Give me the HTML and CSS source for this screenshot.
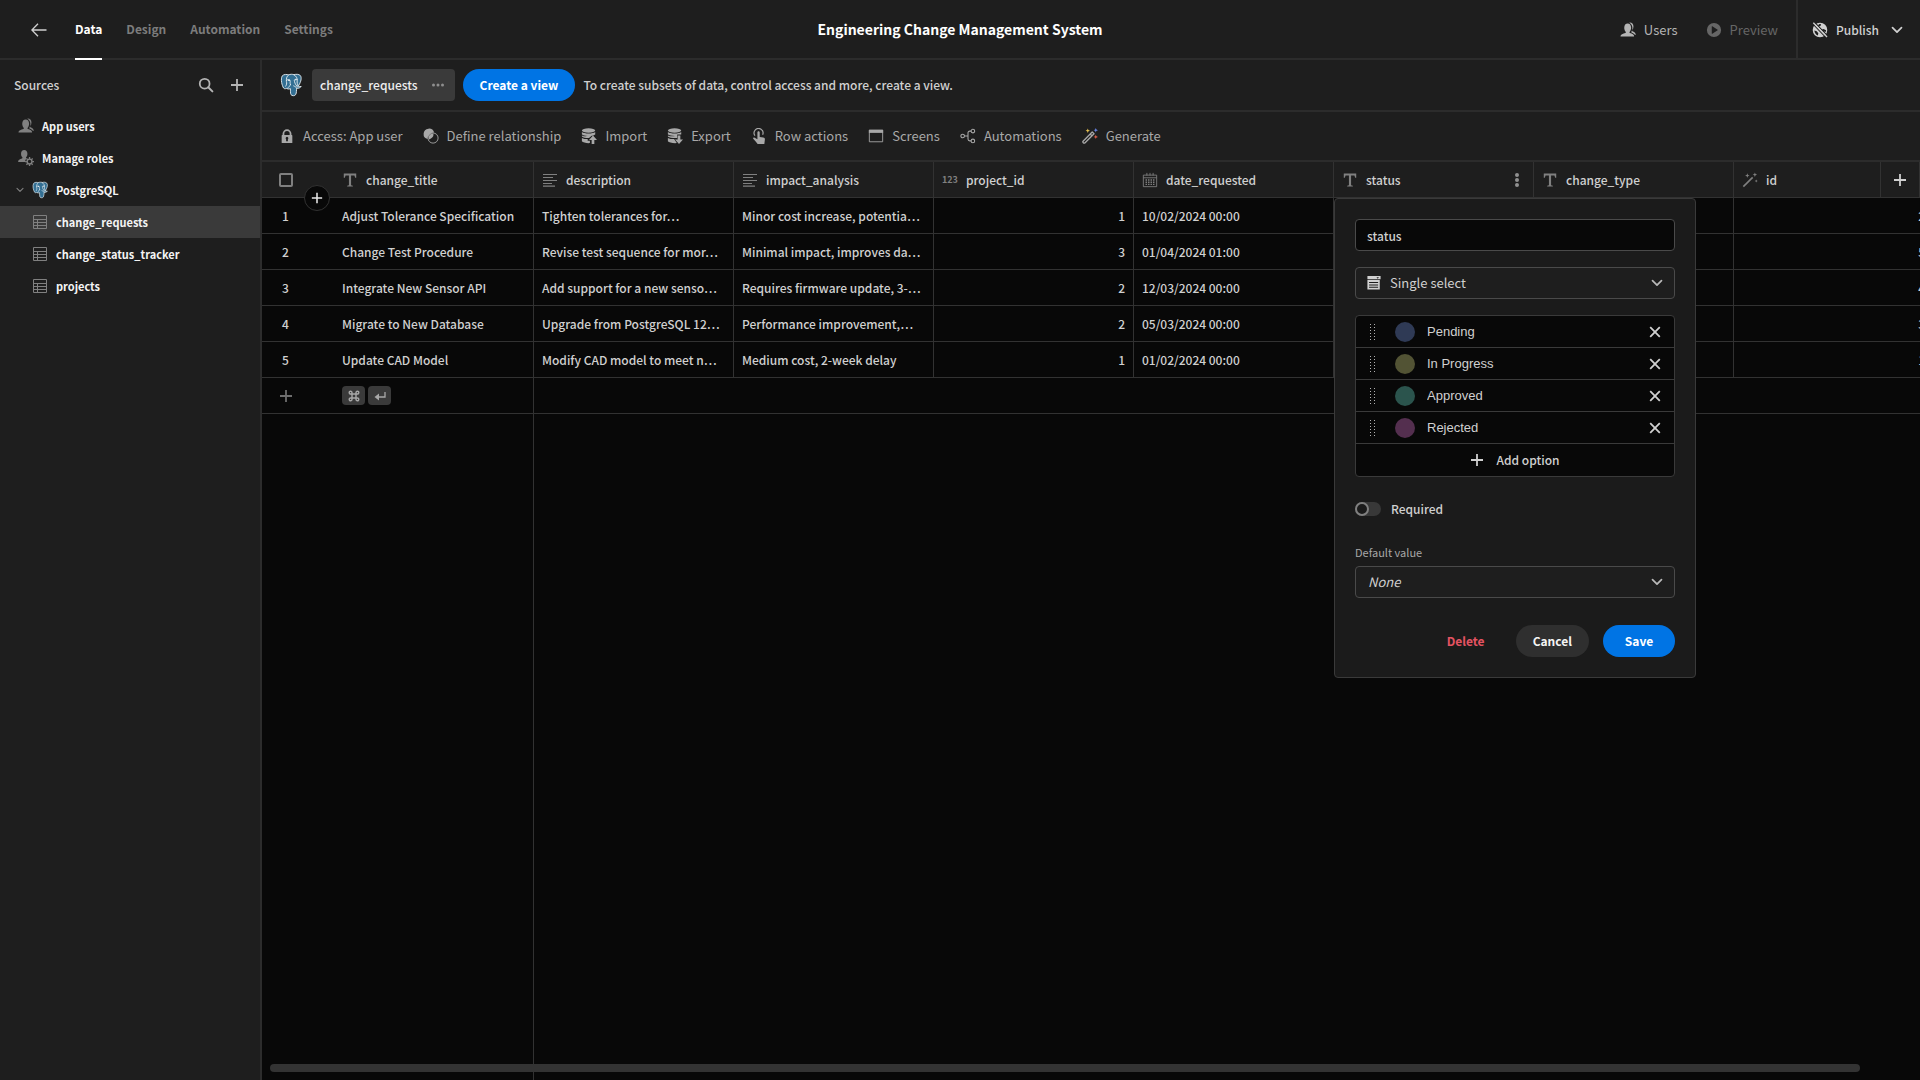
FILE: index.html
```html
<!DOCTYPE html>
<html lang="en">
<head>
<meta charset="utf-8">
<title>Engineering Change Management System</title>
<link rel="stylesheet" href="styles.css">
</head>
<body>
<svg class="sprite" aria-hidden="true">
  <symbol id="i-users" viewBox="1 .5 17 17"><path d="M11.600 12.300c-.6-.3-.6-1.200-.1-1.800.8-1 1.300-2.300 1.300-3.900C12.800 3.900 11.300 2.200 9.200 2.200c-2.200 0-3.700 1.700-3.700 4.400 0 1.600.5 2.900 1.300 3.900.5.6.5 1.500-.1 1.800C4.300 13 1.600 14 1.500 15.600c0 .3.200.4.500.4h13.500c.3 0 .5-.1.500-.4-.1-1.600-2-2.600-4.400-3.300z"/><path d="M11 1.200c2.300-.3 4.300 1.200 4.300 4 0 1.500-.4 2.700-1.200 3.600-.4.500-.4 1.100.1 1.400 1.700.7 3.600 1.900 3.700 3.900h-1.200c-.7-1.200-2-2-3.500-2.500-.3-.3-.2-.7 0-1 .6-1 1-2.200 1-3.900 0-2.300-1.100-4.200-3.200-5.500z"/></symbol>
  <symbol id="i-roles" viewBox="0 0 18 18"><path d="M7 0c2.200 0 3.600 1.600 3.600 4.100 0 1.600-.5 2.900-1.300 3.800-.5.700-.3 1.400.3 1.700A5 5 0 0 0 8 13.500H.6c-.3 0-.5-.2-.5-.5.100-1.600 1.900-2.600 4.400-3.400.6-.3.700-1 .2-1.700-.8-.9-1.300-2.200-1.300-3.800C3.400 1.600 4.800 0 7 0z"/><circle cx="13" cy="13" r="2.700" fill="none" stroke="currentColor" stroke-width="1.600"/><path d="M13 8v2M13 16v2M8 13h2M16 13h2M9.500 9.500l1.300 1.300M15.200 15.200l1.300 1.300M9.500 16.500l1.300-1.300M15.200 10.800l1.300-1.300" stroke="currentColor" stroke-width="1.500"/></symbol>
  <symbol id="i-play" viewBox="0 0 18 18"><path fill-rule="evenodd" d="M9 1a8 8 0 1 0 0 16A8 8 0 0 0 9 1zM6.500 5.200c0-.3.300-.5.600-.3l6 3.700c.3.200.3.600 0 .8l-6 3.700c-.3.200-.6 0-.6-.3z"/></symbol>
  <symbol id="i-globe" viewBox="0 0 18 18"><path fill-rule="evenodd" d="M9 .8a8.200 8.200 0 1 0 0 16.400A8.200 8.200 0 0 0 9 .8zM8.300 2.200l2 .3-.6 1.700-1.900.9-1-1.400zM2.700 9.600l2.600.9 1.800 2.200-.5 2.600A7 7 0 0 1 2.700 9.600zM11 8.600l2-.8 2.800 1.600-.4 1.800-2-.6z"/><path class="cut" d="M1.500 2.600L15.800 17.500M3.300.8L17.500 15.600" stroke-width="1.300"/><path d="M1.500.8l15.400 16" stroke="currentColor" stroke-width="1.500"/></symbol>
  <symbol id="i-chev" viewBox="0 0 12 12"><path d="M1.500 3.700L6 8.200l4.500-4.500" fill="none" stroke="currentColor" stroke-width="1.700" stroke-linecap="round" stroke-linejoin="round"/></symbol>
  <symbol id="i-search" viewBox="0 0 18 18"><circle cx="7.500" cy="7.500" r="5.500" fill="none" stroke="currentColor" stroke-width="2"/><path d="M11.500 11.500l4.700 4.700" stroke="currentColor" stroke-width="2.200" stroke-linecap="round"/></symbol>
  <symbol id="i-plus" viewBox="0 0 14 14"><path d="M7 1v12M1 7h12" stroke="currentColor" stroke-width="1.800"/></symbol>
  <symbol id="i-table" viewBox="0 0 16 16"><path fill="none" stroke="currentColor" d="M1.500 1.500h13v13h-13zM1.500 5.500h13M1.500 8.500h13M1.500 11.500h13M5.500 5.500v9"/></symbol>
  <symbol id="i-pg" viewBox="0 0 24 25"><path fill="#336f93" stroke="#e6eef2" stroke-width="1" stroke-linejoin="round" d="M2.500 2.500C4.500.5 7.500.8 9.300 1.500c2-.9 4.200-.9 5.900-.2 2.200-.8 5.300-.7 7 .9 1.800 2.200.6 7-1.600 10.400l-.7 1.300c.8.500 2.300.3 3.200.2-.8 1.500-3 2.200-4.900 1.800-.3 2.300-.1 5-1 6.900-.8 1.600-4.200 2-5.300.1-.7-1.600-.3-4.300-.6-6.500-1.700.9-3.200.3-4.500-.3-.900.7-2.100.6-2.900-.3C2.300 13.300.3 6.300 2.500 2.500z"/><path fill="none" stroke="#e6eef2" stroke-width="1" stroke-linecap="round" stroke-linejoin="round" d="M9.300 1.500C6.800 3.200 7 6 7 8.600c.6 2.300.2 3.800-.8 5.200M7.200 7.200c1.400-.9 3.100-.8 3.700.1.600 1.700-.4 3.300.5 4.700M15.200 1.300c2.600 1.500 3.800 4 3.600 6.200-.5 2.500.4 4.200.8 5.800M18.700 6.500c-1.500-.7-3 0-3.100.8.400 2.400.5 3.700 3.300 7.200M11.400 12c-.5 1.700-1.800 2.700-3 3.800M15 13.500c1.700.7 2.600 1.400 3.200 2.400"/><path fill="#fff" d="M9 6.700h1.600v1.300H9zM16.300 6.400h1.600v1h-1.600z"/></symbol>
  <symbol id="i-lock" viewBox="0 0 18 18"><path fill-rule="evenodd" d="M14.500 8H14V6.500a5 5 0 0 0-10 0V8h-.5a.5.500 0 0 0-.5.500v8c0 .3.200.5.500.5h11c.3 0 .5-.2.500-.5v-8a.5.500 0 0 0-.5-.5zM6 6.500a3 3 0 0 1 6 0V8H6zm4 6.200V15H8v-2.300a1.500 1.500 0 1 1 2 0z"/></symbol>
  <symbol id="i-rel" viewBox="0 0 18 18"><path d="M12.500 5.200A6 6 0 1 0 5.200 12.500 7 7 0 0 1 12.500 5.200z"/><circle cx="11.300" cy="11.300" r="5.700" fill="none" stroke="currentColor"/><path d="M6.800 8.700a5.500 5.500 0 0 1 5-2.500 6 6 0 0 1-5 6.600 6 6 0 0 1 0-4.100z"/></symbol>
  <symbol id="i-import" viewBox="0 0 18 18"><ellipse cx="8.500" cy="2.800" rx="7.500" ry="2.500"/><path d="M1 4.600c2.600 2.200 12.400 2.200 15 0v2.600c-1.500 1-3 1.300-4 1.400L9 11.300c-3.500.1-6.600-.5-8-1.700V8.300c2 1 4.500 1 6.500.8-3-.2-5.500-.8-6.500-2zM1 11.200c1.500 1 4 1.300 6.500 1.300v1.800H10V17C6 17.200 2 16.500 1 15z"/><path d="M13.500 8.500l4.500 5h-3V18h-3v-4.500H9z"/></symbol>
  <symbol id="i-export" viewBox="0 0 18 18"><ellipse cx="8.500" cy="2.800" rx="7.500" ry="2.500"/><path d="M1 4.600c2.600 2.200 12.400 2.200 15 0v2.700h-4.500v4C7.500 11.600 2.600 11 1 9.600V8.300c2 1 5 1.200 8 .8-3.500-.1-7-.8-8-2zM1 11.200c1.500 1 4 1.300 7 1.300L11 17C6 17.200 2 16.500 1 15z"/><path d="M13.500 18L9 13h3V8.500h3V13h3z"/></symbol>
  <symbol id="i-tap" viewBox="0 0 18 18"><path fill="none" stroke="currentColor" stroke-width="1.300" d="M4.500 8.600a5 5 0 1 1 8.600-1"/><path d="M7.200 5c0-1.700 2.600-1.700 2.600 0v5l4 .8c1.400.3 2 1 1.800 2.300L15 18H7.500C6 16 4 14 2.500 12.200c-.6-1 .6-2 1.600-1.300l3.100 1.800z"/></symbol>
  <symbol id="i-screen" viewBox="0 0 18 18"><path fill="none" stroke="currentColor" d="M1.500 2.500h15v13h-15z"/><path d="M1 2h16v3.500H1z"/></symbol>
  <symbol id="i-flow" viewBox="0 0 18 18"><g fill="none" stroke="currentColor" stroke-width="1.200"><circle cx="3" cy="9" r="2"/><circle cx="14.500" cy="3.500" r="2"/><circle cx="14.500" cy="14.500" r="2"/><path d="M5 9h4M12.500 3.500H11a2 2 0 0 0-2 2v7a2 2 0 0 0 2 2h1.500"/></g></symbol>
  <symbol id="i-magic" viewBox="0 0 18 18"><path fill="none" stroke="currentColor" stroke-width="1.500" stroke-linejoin="round" d="M1.200 14.800L11.500 4.500l2 2L3.200 16.800c-1.200.8-2.800-.8-2-2zM9.200 6.800l2 2"/><path fill="#e8c252" d="M6.500.5l.7 1.800 1.800.7-1.800.7-.7 1.800-.7-1.800L4 3l1.800-.7z"/><path fill="#6a86e8" d="M15.500 0l.7 1.800 1.800.7-1.800.7-.7 1.800-.7-1.800-1.800-.7 1.800-.7z"/><path fill="#e2604c" d="M15.500 7.500l.7 1.800 1.800.7-1.800.7-.7 1.800-.7-1.800L13 10l1.800-.7z"/></symbol>
  <symbol id="i-wand" viewBox="0 0 18 18"><path stroke="currentColor" stroke-width="1.800" d="M1.500 16.500L12 6"/><path d="M6 1.500l.7 1.800 1.800.7-1.800.7L6 6.500l-.7-1.800L3.500 4l1.800-.7zM14.500.5l.7 1.800 1.800.7-1.800.7-.7 1.800-.7-1.800L12 3l1.800-.7zM16 8.500l.5 1.200 1.200.5-1.200.5-.5 1.200-.5-1.200-1.200-.5 1.200-.5z"/></symbol>
  <symbol id="i-text" viewBox="0 0 18 18"><path d="M2 1.800h14v4.800h-1.200l-.8-2.600h-3.800v10.900l2 .5v.9H5.800v-.9l2-.5V4H4l-.8 2.600H2z"/></symbol>
  <symbol id="i-long" viewBox="0 0 16 16"><path stroke="currentColor" stroke-width="1.200" d="M1 2.500h14M1 5.500h10M1 8.500h14M1 11.500h9M1 14.200h12"/></symbol>
  <symbol id="i-cal" viewBox="0 0 18 18"><path fill="none" stroke="currentColor" d="M1.500 3.500h15v13h-15zM1.500 6.500h15M5.500 1v3M9 1v3M12.500 1v3"/><path stroke="currentColor" stroke-width="1.500" stroke-dasharray="1.600 1.200" d="M4 9h10.500M4 11.500h10.500M4 14h10.500"/></symbol>
  <symbol id="i-list" viewBox="1 1 16 17"><path fill-rule="evenodd" d="M1 1h16v4H1zM12 2.500l1.500 1.700L15 2.500zM1 6h15v11.500H1zM3 8.200v1.200h11V8.200zM3 11.200v1.200h11v-1.200zM3 14.200v1.200h11v-1.200z"/></symbol>
  <symbol id="i-x" viewBox="0 0 12 12"><path stroke="currentColor" stroke-width="1.800" d="M1.200 1.200l9.600 9.600M10.800 1.200l-9.600 9.600"/></symbol>
  <symbol id="i-drag" viewBox="0 0 6 16"><path stroke="currentColor" stroke-dasharray="1 2" d="M1.500 0v16M5.500 0v16"/></symbol>
  <symbol id="i-cmd" viewBox="0 0 12 12"><path fill="none" stroke="currentColor" stroke-width="1.400" d="M4 4h4v4H4zM4 4H2.700A1.400 1.400 0 1 1 4 2.700zM8 4V2.700A1.400 1.400 0 1 1 9.300 4zM8 8h1.300A1.400 1.400 0 1 1 8 9.300zM4 8v1.300A1.400 1.400 0 1 1 2.700 8z"/></symbol>
  <symbol id="i-enter" viewBox="0 0 12 12"><path fill="none" stroke="currentColor" stroke-width="1.300" d="M11 2v5H3"/><path d="M5 3.500v7L0.500 7z"/></symbol>
</svg>

<header class="topbar">
  <a class="back" href="#" aria-label="Back"><svg class="ic16" viewBox="0 0 16 16"><path d="M15.500 8H1.200M7 1.700L.9 8 7 14.300" fill="none" stroke="currentColor" stroke-width="1.300"/></svg></a>
  <nav class="tabs">
    <a class="tab active" href="#">Data</a>
    <a class="tab" href="#">Design</a>
    <a class="tab" href="#">Automation</a>
    <a class="tab" href="#">Settings</a>
  </nav>
  <h1 class="title">Engineering Change Management System</h1>
  <div class="actions">
    <button class="action"><svg class="ic16"><use href="#i-users"/></svg>Users</button>
    <button class="action dim"><svg class="ic16"><use href="#i-play"/></svg>Preview</button>
    <button class="action publish"><svg class="ic16"><use href="#i-globe"/></svg>Publish<svg class="ic12"><use href="#i-chev"/></svg></button>
  </div>
</header>

<div class="shell">
  <aside class="sidebar">
    <div class="side-head">
      <h2 class="side-title">Sources</h2>
      <button class="icon-btn" aria-label="Search"><svg class="ic16"><use href="#i-search"/></svg></button>
      <button class="icon-btn" aria-label="Add source"><svg class="ic14"><use href="#i-plus"/></svg></button>
    </div>
    <nav class="tree">
      <a class="node" href="#"><svg class="ic16"><use href="#i-users"/></svg>App users</a>
      <a class="node" href="#"><svg class="ic16"><use href="#i-roles"/></svg>Manage roles</a>
      <a class="node source" href="#"><svg class="ic8"><use href="#i-chev"/></svg><svg class="pg-small"><use href="#i-pg"/></svg>PostgreSQL</a>
      <a class="node child selected" href="#"><svg class="ic16"><use href="#i-table"/></svg>change_requests</a>
      <a class="node child" href="#"><svg class="ic16"><use href="#i-table"/></svg>change_status_tracker</a>
      <a class="node child" href="#"><svg class="ic16"><use href="#i-table"/></svg>projects</a>
    </nav>
  </aside>

  <main class="main">
    <div class="viewbar">
      <svg class="pg-large"><use href="#i-pg"/></svg>
      <button class="view-tab">change_requests<svg class="dots" viewBox="0 0 12 4"><circle cx="1.500" cy="2" r="1.500"/><circle cx="6" cy="2" r="1.500"/><circle cx="10.500" cy="2" r="1.500"/></svg></button>
      <button class="btn primary">Create a view</button>
      <span class="hint">To create subsets of data, control access and more, create a view.</span>
    </div>
    <div class="toolbar">
      <button class="tool"><svg class="ic16"><use href="#i-lock"/></svg>Access: App user</button>
      <button class="tool"><svg class="ic16"><use href="#i-rel"/></svg>Define relationship</button>
      <button class="tool"><svg class="ic16"><use href="#i-import"/></svg>Import</button>
      <button class="tool"><svg class="ic16"><use href="#i-export"/></svg>Export</button>
      <button class="tool"><svg class="ic16"><use href="#i-tap"/></svg>Row actions</button>
      <button class="tool"><svg class="ic16"><use href="#i-screen"/></svg>Screens</button>
      <button class="tool"><svg class="ic16"><use href="#i-flow"/></svg>Automations</button>
      <button class="tool"><svg class="ic16"><use href="#i-magic"/></svg>Generate</button>
    </div>

    <div class="grid">
      <table class="data">
        <colgroup><col class="c-gutter"><col class="c"><col class="c"><col class="c"><col class="c"><col class="c"><col class="c"><col class="c"><col class="c"></colgroup>
        <thead>
          <tr>
            <th class="gutter"><input class="check" type="checkbox" aria-label="Select all rows"><button class="insert" aria-label="Insert row"><svg class="ic12"><use href="#i-plus"/></svg></button></th>
            <th><div class="head"><svg class="ic16"><use href="#i-text"/></svg>change_title</div></th>
            <th><div class="head"><svg class="ic16"><use href="#i-long"/></svg>description</div></th>
            <th><div class="head"><svg class="ic16"><use href="#i-long"/></svg>impact_analysis</div></th>
            <th><div class="head"><span class="num-ic">123</span>project_id</div></th>
            <th><div class="head"><svg class="ic16"><use href="#i-cal"/></svg>date_requested</div></th>
            <th class="open"><div class="head"><svg class="ic16"><use href="#i-text"/></svg>status<button class="more" aria-label="Column menu"><svg class="kebab" viewBox="0 0 4 14"><circle cx="2" cy="2" r="2"/><circle cx="2" cy="7" r="2"/><circle cx="2" cy="12" r="2"/></svg></button></div>
              <form class="popover">
                <input class="field" type="text" value="status" aria-label="Name">
                <div class="picker"><svg class="ic14 lead"><use href="#i-list"/></svg><select class="field with-icon" aria-label="Type"><option>Single select</option></select><svg class="ic12 arrow"><use href="#i-chev"/></svg></div>
                <div class="options">
                  <div class="option"><svg class="drag"><use href="#i-drag"/></svg><span class="swatch blue"></span><input class="opt-name" type="text" value="Pending" aria-label="Option 1"><button class="remove" type="button" aria-label="Remove"><svg class="ic12"><use href="#i-x"/></svg></button></div>
                  <div class="option"><svg class="drag"><use href="#i-drag"/></svg><span class="swatch olive"></span><input class="opt-name" type="text" value="In Progress" aria-label="Option 2"><button class="remove" type="button" aria-label="Remove"><svg class="ic12"><use href="#i-x"/></svg></button></div>
                  <div class="option"><svg class="drag"><use href="#i-drag"/></svg><span class="swatch teal"></span><input class="opt-name" type="text" value="Approved" aria-label="Option 3"><button class="remove" type="button" aria-label="Remove"><svg class="ic12"><use href="#i-x"/></svg></button></div>
                  <div class="option"><svg class="drag"><use href="#i-drag"/></svg><span class="swatch plum"></span><input class="opt-name" type="text" value="Rejected" aria-label="Option 4"><button class="remove" type="button" aria-label="Remove"><svg class="ic12"><use href="#i-x"/></svg></button></div>
                  <button class="add-option" type="button"><svg class="ic14"><use href="#i-plus"/></svg>Add option</button>
                </div>
                <label class="toggle"><input class="switch" type="checkbox">Required</label>
                <div class="default">
                  <label class="label" for="default-value">Default value</label>
                  <div class="picker"><select class="field none" id="default-value"><option>None</option></select><svg class="ic12 arrow"><use href="#i-chev"/></svg></div>
                </div>
                <div class="buttons">
                  <button class="btn danger" type="button">Delete</button>
                  <button class="btn secondary" type="button">Cancel</button>
                  <button class="btn primary" type="button">Save</button>
                </div>
              </form>
            </th>
            <th><div class="head"><svg class="ic16"><use href="#i-text"/></svg>change_type</div></th>
            <th><div class="head"><svg class="ic16"><use href="#i-wand"/></svg>id</div></th>
          </tr>
        </thead>
        <tbody>
          <tr><td class="gutter">1</td><td>Adjust Tolerance Specification</td><td>Tighten tolerances for…</td><td>Minor cost increase, potentia…</td><td class="num">1</td><td>10/02/2024 00:00</td><td></td><td></td><td class="num">2</td></tr>
          <tr><td class="gutter">2</td><td>Change Test Procedure</td><td>Revise test sequence for mor…</td><td>Minimal impact, improves da…</td><td class="num">3</td><td>01/04/2024 01:00</td><td></td><td></td><td class="num">5</td></tr>
          <tr><td class="gutter">3</td><td>Integrate New Sensor API</td><td>Add support for a new senso…</td><td>Requires firmware update, 3-…</td><td class="num">2</td><td>12/03/2024 00:00</td><td></td><td></td><td class="num">4</td></tr>
          <tr><td class="gutter">4</td><td>Migrate to New Database</td><td>Upgrade from PostgreSQL 12…</td><td>Performance improvement,…</td><td class="num">2</td><td>05/03/2024 00:00</td><td></td><td></td><td class="num">3</td></tr>
          <tr><td class="gutter">5</td><td>Update CAD Model</td><td>Modify CAD model to meet n…</td><td>Medium cost, 2-week delay</td><td class="num">1</td><td>01/02/2024 00:00</td><td></td><td></td><td class="num">1</td></tr>
          <tr class="new-row"><td class="gutter"><button class="add-row" aria-label="Add row"><svg class="ic14"><use href="#i-plus"/></svg></button></td><td><div class="keys"><kbd class="key"><svg class="ic12"><use href="#i-cmd"/></svg></kbd><kbd class="key"><svg class="ic12"><use href="#i-enter"/></svg></kbd></div></td><td colspan="7"></td></tr>
        </tbody>
      </table>
      <div class="sticky-fill"></div>
      <button class="new-column" aria-label="Add column"><svg class="ic14"><use href="#i-plus"/></svg></button>
      <div class="scrollbar"></div>
    </div>
  </main>
</div>
</body>
</html>
```
FILE: styles.css
```css
:root {
  --bg: #1e1e1e;
  --bg-grid: #080808;
  --line: #2c2c2c;
  --cell-line: #323232;
  --text: #d0d0d0;
  --muted: #a8a8a8;
  --blue: #0074e4;
  --font: "Noto Sans CJK KR", "Noto Sans CJK SC", "Noto Sans", sans-serif;
}

*, *::before, *::after { box-sizing: border-box; }

body {
  margin: 0;
  height: 100vh;
  display: flex;
  flex-direction: column;
  overflow: hidden;
  background: var(--bg);
  color: var(--text);
  font: 500 12px/20px var(--font);
}

button, input, select { font: inherit; color: inherit; }
button { border: 0; background: none; padding: 0; white-space: nowrap; }
a { color: inherit; text-decoration: none; }
svg { flex: none; fill: currentColor; display: block; }

.sprite { position: absolute; width: 0; height: 0; }
.cut { stroke: var(--bg); }
.ic16 { width: 16px; height: 16px; }
.ic14 { width: 14px; height: 14px; }
.ic12 { width: 12px; height: 12px; }
.ic8 { width: 8px; height: 8px; }

/* Top bar */
.topbar {
  display: grid;
  grid-template-columns: 1fr auto 1fr;
  height: 60px;
  flex: none;
  border-bottom: 2px solid var(--line);
}
.back { grid-row: 1; grid-column: 1; align-self: center; margin-left: 31px; width: 16px; }
.tabs { grid-row: 1; grid-column: 1; display: flex; gap: 24px; margin-left: 75px; }
.tab { height: 60px; line-height: 58px; font-weight: 700; color: #7c7c7c; }
.tab.active { color: #fff; border-bottom: 2px solid #fff; }
.title { margin: 0; font-size: 14px; font-weight: 700; line-height: 58px; color: #fff; }
.actions { display: flex; justify-content: flex-end; }
.action { display: flex; align-items: center; gap: 8px; margin-right: 28px; font-size: 13px; font-weight: 400; color: #b4b4b4; }
.action.dim { color: #666; margin-right: 18px; }
.action.publish { margin: 0; padding: 0 17px 0 14px; border-left: 2px solid var(--line); font-size: 12px; font-weight: 500; color: var(--text); }
.action.publish .ic12 { margin-left: 4px; }

.shell { flex: 1; display: flex; min-height: 0; }

/* Sidebar */
.sidebar { width: 262px; flex: none; border-right: 2px solid var(--line); }
.side-head { display: flex; align-items: center; gap: 16px; height: 50px; padding: 0 16px 0 14px; }
.side-title { flex: 1; margin: 0; font-size: 12px; font-weight: 500; }
.icon-btn { color: #b4b4b4; }
.tree { font-size: 11px; font-weight: 700; color: #f4f4f4; }
.node { display: flex; align-items: center; gap: 8px; height: 32px; padding-left: 18px; }
.node .ic16, .node .ic8 { color: #808080; }
.node.source { padding-left: 16px; }
.node.child { padding-left: 32px; }
.node.selected { background: #3a3a3a; }
.pg-small { width: 16px; height: 18px; }
.pg-large { width: 22px; height: 24px; margin-right: 2px; }

/* Main header rows */
.main { flex: 1; min-width: 0; display: flex; flex-direction: column; }
.viewbar { display: flex; align-items: center; gap: 8px; height: 52px; flex: none; padding: 0 18px; border-bottom: 2px solid var(--line); }
.view-tab { display: flex; align-items: center; justify-content: space-between; gap: 14px; height: 32px; padding: 0 11px 0 8px; border-radius: 4px; background: #3a3a3a; color: #eee; }
.dots { width: 12px; height: 4px; color: #8e8e8e; }
.btn { height: 32px; min-width: 72px; padding: 0 17px; border-radius: 16px; font-weight: 700; }
.btn.primary { background: var(--blue); color: #fff; }
.btn.secondary { background: #2f2f2f; color: #f4f4f4; }
.btn.danger { color: #e45362; }
.toolbar { display: flex; align-items: center; gap: 20px; height: 50px; flex: none; padding: 0 17px; border-bottom: 2px solid var(--line); }
.tool { display: flex; align-items: center; gap: 8px; font-size: 13px; font-weight: 400; color: var(--muted); }

/* Data grid */
.grid { position: relative; flex: 1; min-height: 0; display: flex; flex-direction: column; overflow: hidden; background: var(--bg-grid); }
.data { width: 1672px; flex: none; table-layout: fixed; border-collapse: separate; border-spacing: 0; }
.c-gutter { width: 72px; }
.c { width: 200px; }
.data th, .data td { height: 36px; padding: 0 8px; border-right: 1px solid var(--cell-line); border-bottom: 1px solid var(--cell-line); text-align: left; font-weight: 500; white-space: nowrap; }
.data th { position: relative; background: var(--bg); }
.data td { overflow: hidden; }
.data .gutter { border-right: 0; padding: 0; }
.data td.gutter { padding-left: 20px; }
.data .num { text-align: right; }
.head { display: flex; align-items: center; gap: 8px; }
.head > svg { color: #808080; }
.num-ic { width: 16px; font-size: 9px; font-weight: 700; color: #808080; }
.more { margin-left: auto; padding: 0 6px; color: #909090; }
.kebab { width: 4px; height: 14px; }
.check { appearance: none; display: block; width: 14px; height: 14px; margin: 0 0 0 17px; border: 2px solid #808080; border-radius: 2px; }
.insert { position: absolute; left: 42px; bottom: -14px; z-index: 2; width: 26px; height: 26px; border: 1px solid var(--cell-line); border-radius: 50%; background: var(--bg-grid); color: #e8e8e8; display: grid; place-items: center; }
.add-row { display: block; margin-left: -3px; color: #6e6e6e; }
.new-row td:last-child { border-right: 0; }
.keys { display: flex; gap: 3px; }
.key { display: grid; place-items: center; width: 23px; height: 19px; border-radius: 4px; background: #3a3a3a; color: #a8a8a8; }
.sticky-fill { flex: 1; width: 272px; border-right: 1px solid var(--cell-line); }
.new-column { position: absolute; top: 0; right: 0; width: 40px; height: 36px; border: 1px solid var(--cell-line); border-top: 0; background: var(--bg); display: grid; place-items: center; }
.scrollbar { position: absolute; left: 8px; right: 60px; bottom: 8px; height: 8px; border-radius: 4px; background: #333; }

/* Column editor */
.popover { position: absolute; top: calc(100% + 1px); left: 0; z-index: 3; display: flex; flex-direction: column; gap: 16px; width: 362px; padding: 20px; border: 1px solid #3a3a3a; border-radius: 4px; background: #1b1b1b; }
.field { display: block; width: 100%; height: 32px; padding: 0 11px; border: 1px solid #4a4a4a; border-radius: 4px; background: var(--bg-grid); appearance: none; outline: 0; }
.picker { position: relative; }
.picker .field { background: #1e1e1e; font-size: 13px; font-weight: 400; }
.picker .with-icon { padding-left: 34px; }
.picker .none { padding-left: 12px; font-style: italic; }
.lead { position: absolute; left: 12px; top: 9px; }
.arrow { position: absolute; right: 12px; top: 10px; color: #b8b8b8; pointer-events: none; }
.options { border: 1px solid #3a3a3a; border-radius: 4px; background: var(--bg-grid); overflow: hidden; }
.option { display: flex; align-items: center; height: 32px; padding: 0 13px; border-bottom: 1px solid #3a3a3a; }
.drag { width: 6px; height: 16px; color: #b0b0b0; }
.swatch { width: 20px; height: 20px; margin: 0 12px 0 20px; border-radius: 50%; }
.blue { background: #2f3a55; }
.olive { background: #525334; }
.teal { background: #2b544d; }
.plum { background: #542f4f; }
.opt-name { flex: 1; min-width: 0; height: 24px; padding: 0; border: 0; background: none; font: 400 13px/20px "Liberation Sans", Arial, sans-serif; outline: 0; }
.add-option { display: flex; align-items: center; justify-content: center; gap: 12px; width: 100%; height: 32px; }
.toggle { display: flex; align-items: center; gap: 10px; height: 32px; }
.switch { appearance: none; display: grid; width: 26px; height: 14px; margin: 0; border-radius: 7px; background: #383838; }
.switch::before { content: ""; width: 14px; height: 14px; border: 2px solid #808080; border-radius: 50%; background: #1b1b1b; }
.label { display: block; margin-bottom: 3px; font-size: 11px; line-height: 22px; font-weight: 400; color: var(--muted); }
.buttons { display: flex; justify-content: flex-end; gap: 14px; padding-top: 11px; }
```
